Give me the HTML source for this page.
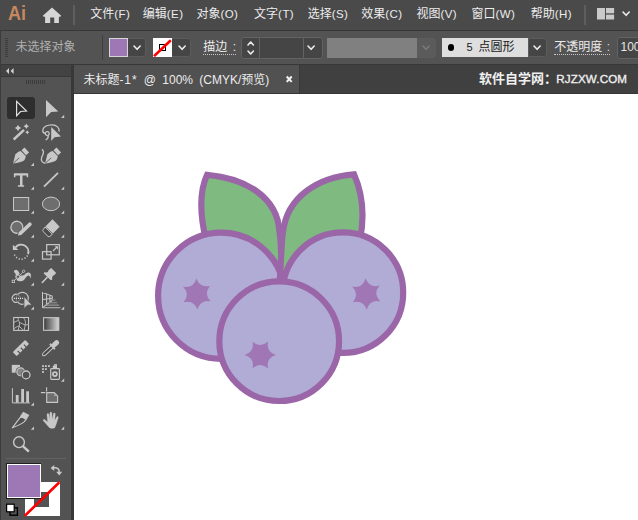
<!DOCTYPE html>
<html lang="zh"><head><meta charset="utf-8"><title>Adobe Illustrator</title>
<style>
html,body{margin:0;padding:0;overflow:hidden}
body{width:638px;height:520px;overflow:hidden;position:relative;background:#535353;
 font-family:"Liberation Sans","Noto Sans CJK SC",sans-serif;font-size:12px;color:#dcdcdc}
.abs{position:absolute}
.cjt{font-family:"Liberation Sans","Noto Sans CJK SC",sans-serif;white-space:nowrap}
.t{position:absolute;white-space:nowrap;line-height:14px;height:14px}
#menubar{left:0;top:0;width:638px;height:30px;background:#4a4a4a}
#ctrl{left:0;top:31px;width:638px;height:33px;background:#535353;overflow:hidden}
.hline{position:absolute;left:0;width:638px;height:1px;background:#383838}
.dd{position:absolute;background:#454545;box-shadow:inset 0 0 0 1px #5c5c5c}
.chev{position:absolute}
.dot{border-bottom:1px dotted #c8c8c8}
</style></head><body>
<div id="menubar" class="abs"><div class="t" style="left:7.9px;top:2.2px;font-size:21px;font-weight:bold;line-height:22px;height:22px;color:#c6885f;transform:scaleX(.86);transform-origin:0 0">Ai</div><svg class="abs" style="left:42px;top:6px" width="20" height="18" viewBox="42 6 20 18"><path d="M52 7.6L61.2 15.8L60.4 16.8H58.9V22.9H54.2V17.6H50.2V22.9H45.1V16.8H43.6L42.8 15.8Z" fill="#d6d6d6"/></svg><div class="abs" style="left:73.4px;top:5px;width:1.5px;height:20px;background:#5e5e5e"></div><div class="t" style="left:90.3px;top:7px;color:#ececec"><span class="cjt" style="font-size:12px;color:#ececec">文件</span><span style="font-size:11.5px;letter-spacing:.45px">(F)</span></div><div class="t" style="left:142.8px;top:7px;color:#ececec"><span class="cjt" style="font-size:12px;color:#ececec">编辑</span><span style="font-size:11.5px;letter-spacing:.45px">(E)</span></div><div class="t" style="left:196.4px;top:7px;color:#ececec"><span class="cjt" style="font-size:12px;color:#ececec">对象</span><span style="font-size:11.5px;letter-spacing:.45px">(O)</span></div><div class="t" style="left:254.1px;top:7px;color:#ececec"><span class="cjt" style="font-size:12px;color:#ececec">文字</span><span style="font-size:11.5px;letter-spacing:.45px">(T)</span></div><div class="t" style="left:307.7px;top:7px;color:#ececec"><span class="cjt" style="font-size:12px;color:#ececec">选择</span><span style="font-size:11.5px;letter-spacing:.45px">(S)</span></div><div class="t" style="left:361.3px;top:7px;color:#ececec"><span class="cjt" style="font-size:12px;color:#ececec">效果</span><span style="font-size:11.5px;letter-spacing:.45px">(C)</span></div><div class="t" style="left:416.4px;top:7px;color:#ececec"><span class="cjt" style="font-size:12px;color:#ececec">视图</span><span style="font-size:11.5px;letter-spacing:.45px">(V)</span></div><div class="t" style="left:471.5px;top:7px;color:#ececec"><span class="cjt" style="font-size:12px;color:#ececec">窗口</span><span style="font-size:11.5px;letter-spacing:.45px">(W)</span></div><div class="t" style="left:530.8px;top:7px;color:#ececec"><span class="cjt" style="font-size:12px;color:#ececec">帮助</span><span style="font-size:11.5px;letter-spacing:.45px">(H)</span></div><div class="abs" style="left:584.3px;top:5px;width:1.5px;height:20px;background:#5e5e5e"></div><svg class="abs" style="left:596.9px;top:7.7px" width="18" height="12" viewBox="0 0 18 12"><rect x="0" y="0" width="8" height="11.5" fill="#cacaca"/><rect x="9" y="0" width="8.1" height="5.3" fill="#cacaca"/><rect x="9" y="6.6" width="8.1" height="4.9" fill="#cacaca"/></svg><svg class="abs" style="left:621.3px;top:9.95px" width="10.2" height="7.3" viewBox="-2 -2 10.2 7.3"><path d="M0 0L3.1 3.3L6.2 0" fill="none" stroke="#ececec" stroke-width="1.6" stroke-linecap="round" stroke-linejoin="round"/></svg></div><div class="hline" style="top:30px"></div><div id="ctrl" class="abs"><div class="abs" style="left:5px;top:7px;width:3px;height:19px;background:repeating-linear-gradient(#3c3c3c 0 1px,transparent 1px 2px)"></div><div class="t" style="left:15.5px;top:8.7px"><span class="cjt" style="font-size:12px;color:#b0b0b0">未选择对象</span></div><div class="abs" style="left:102px;top:4px;width:1px;height:25px;background:#3e3e3e"></div><div class="dd" style="left:108.5px;top:7px;width:37.5px;height:19px;border-radius:3px"></div><div class="abs" style="left:108.5px;top:7px;width:17.5px;height:17px;background:#9e78b4;border:1px solid #d6d6d6"></div><svg class="abs" style="left:132.4px;top:12.85px" width="10.2" height="7.3" viewBox="-2 -2 10.2 7.3"><path d="M0 0L3.1 3.3L6.2 0" fill="none" stroke="#ececec" stroke-width="1.6" stroke-linecap="round" stroke-linejoin="round"/></svg><div class="dd" style="left:153px;top:7px;width:37.5px;height:19px;border-radius:3px"></div><svg class="abs" style="left:153px;top:7px" width="19" height="19" viewBox="0 0 19 19"><rect width="19" height="19" fill="#fff"/><rect x="6.5" y="6.5" width="6" height="6" fill="none" stroke="#000" stroke-width="1"/><path d="M1 18.2L17.8 2.2" stroke="#ff0000" stroke-width="2.6"/></svg><svg class="abs" style="left:176.70000000000002px;top:12.85px" width="10.2" height="7.3" viewBox="-2 -2 10.2 7.3"><path d="M0 0L3.1 3.3L6.2 0" fill="none" stroke="#ececec" stroke-width="1.6" stroke-linecap="round" stroke-linejoin="round"/></svg><div class="t dot" style="left:203.3px;top:9px;color:#dcdcdc;height:14px;word-spacing:2px;color:#ececec"><span class="cjt" style="font-size:12px;color:#ececec">描边</span> :</div><div class="abs" style="left:241px;top:6px;width:79.5px;height:19.5px;background:#454545;border:1px solid #626262;border-radius:3px"></div><div class="abs" style="left:259px;top:7px;width:1px;height:19.5px;background:#626262"></div><div class="abs" style="left:303px;top:7px;width:1px;height:19.5px;background:#626262"></div><svg class="abs" style="left:245.60000000000002px;top:8.5px" width="9.4" height="7" viewBox="-2 -2 9.4 7"><path d="M0 3L2.7 0L5.4 3" fill="none" stroke="#ececec" stroke-width="1.6" stroke-linecap="round" stroke-linejoin="round"/></svg><svg class="abs" style="left:245.60000000000002px;top:17.5px" width="9.4" height="7" viewBox="-2 -2 9.4 7"><path d="M0 0L2.7 3L5.4 0" fill="none" stroke="#ececec" stroke-width="1.6" stroke-linecap="round" stroke-linejoin="round"/></svg><svg class="abs" style="left:306.4px;top:12.85px" width="10.2" height="7.3" viewBox="-2 -2 10.2 7.3"><path d="M0 0L3.1 3.3L6.2 0" fill="none" stroke="#ececec" stroke-width="1.6" stroke-linecap="round" stroke-linejoin="round"/></svg><div class="abs" style="left:326.8px;top:6.5px;width:90.2px;height:20px;background:#808080"></div><div class="abs" style="left:417px;top:6.5px;width:18.5px;height:20px;background:#5b5b5b;border-radius:0 3px 3px 0"></div><svg class="abs" style="left:421.4px;top:12.85px" width="10.2" height="7.3" viewBox="-2 -2 10.2 7.3"><path d="M0 0L3.1 3.3L6.2 0" fill="none" stroke="#7a7a7a" stroke-width="1.6" stroke-linecap="round" stroke-linejoin="round"/></svg><div class="abs" style="left:442px;top:7px;width:86px;height:19px;background:#dedede"></div><div class="abs" style="left:447.8px;top:13.3px;width:6.4px;height:6.4px;border-radius:3.2px;background:#000"></div><div class="t" style="left:466.4px;top:9px;color:#1a1a1a"><span style="font-size:11px">5</span><span style="display:inline-block;width:5.9px"></span><span class="cjt" style="font-size:12px;color:#1a1a1a">点圆形</span></div><div class="dd" style="left:528px;top:7px;width:18.5px;height:19px;border-radius:0 3px 3px 0"></div><svg class="abs" style="left:532.1px;top:12.85px" width="10.2" height="7.3" viewBox="-2 -2 10.2 7.3"><path d="M0 0L3.1 3.3L6.2 0" fill="none" stroke="#ececec" stroke-width="1.6" stroke-linecap="round" stroke-linejoin="round"/></svg><div class="t dot" style="left:554.3px;top:9px;color:#dcdcdc;word-spacing:1px"><span class="cjt" style="font-size:12px;color:#ececec">不透明度</span> :</div><div class="abs" style="left:617px;top:6px;width:30px;height:19.5px;background:#454545;border:1px solid #626262;border-radius:3px"></div><div class="t" style="left:620.5px;top:9px;color:#e4e4e4">100</div></div><div class="hline" style="top:64px"></div><div class="abs" style="left:71px;top:65px;width:567px;height:29px;background:#404040"></div><div class="abs" style="left:71px;top:65px;width:3px;height:455px;background:#383838"></div><div class="abs" style="left:74px;top:65px;width:225px;height:29px;background:#515151"></div><div class="abs" style="left:299px;top:65px;width:1px;height:29px;background:#3a3a3a"></div><div class="abs" style="left:74px;top:93px;width:564px;height:1px;background:#363636"></div><div class="t" style="left:83.4px;top:72.6px;color:#ececec;word-spacing:3px"><span class="cjt" style="font-size:12px;color:#ececec">未标题</span><span style="letter-spacing:.9px">-1*</span> @ 100% (CMYK/<span class="cjt" style="font-size:12px;color:#ececec">预览</span>)</div><svg class="abs" style="left:284.7px;top:74.8px" width="9" height="9" viewBox="0 0 9 9"><path d="M1.7 1.5L6.7 6.9M6.7 1.5L1.7 6.9" stroke="#f2f2f2" stroke-width="2"/></svg><div class="t" style="left:479px;top:72px;font-size:13px;color:#f0f0f0"><span class="cjt" style="font-size:13px;font-weight:bold;color:#f0f0f0">软件自学网：</span><span style="font-size:11.6px;letter-spacing:.15px;margin-left:-.8px;-webkit-text-stroke:.35px #f0f0f0">RJZXW.COM</span></div><div class="abs" style="left:74px;top:94px;width:564px;height:426px;background:#fff"></div><svg class="abs" style="left:74px;top:94px" width="564" height="426" viewBox="74 94 564 426"><path d="M207.1 174.8 C244 178 277.5 196 279.5 232 C281 240 281.5 260 281.5 279 L230 260 L206 240 C199.3 212 200 190 207.1 174.8Z" fill="#7fba80" stroke="#9b66a7" stroke-width="6.2" stroke-linejoin="miter" stroke-miterlimit="10"/><circle cx="221.25" cy="295.75" r="63.15" fill="#b0acd6" stroke="#9b66a7" stroke-width="6.2"/><path d="M354 174.3 C318 177 287 197 283 232 C281.6 240 281.2 257 279.9 279 L330 260 L360 240 C365.5 212 361 190 354 174.3Z" fill="#7fba80" stroke="#9b66a7" stroke-width="6.2" stroke-linejoin="miter" stroke-miterlimit="10"/><circle cx="342.95" cy="292.65" r="60.25" fill="#b0acd6" stroke="#9b66a7" stroke-width="6.2"/><circle cx="279.2" cy="341.15" r="59.85" fill="#b0acd6" stroke="#9b66a7" stroke-width="6.2"/><path d="M196.4 278.4Q200.0 288.3 210.1 285.7Q203.4 293.8 210.7 301.3Q200.3 299.5 197.4 309.6Q193.8 299.7 183.7 302.3Q190.4 294.2 183.1 286.7Q193.5 288.5 196.4 278.4Z" fill="#a077b4"/><path d="M268.1 341.5Q265.9 351.8 275.9 355.0Q265.9 358.2 268.1 368.5Q260.3 361.5 252.5 368.5Q254.7 358.2 244.7 355.0Q254.7 351.8 252.5 341.5Q260.3 348.5 268.1 341.5Z" fill="#a077b4"/><path d="M365.6 278.2Q369.3 288.3 379.6 285.6Q372.7 293.8 380.2 301.4Q369.6 299.5 366.8 309.8Q363.1 299.7 352.8 302.4Q359.7 294.2 352.2 286.6Q362.8 288.5 365.6 278.2Z" fill="#a077b4"/></svg><div class="abs" style="left:0;top:31px;width:1.4px;height:489px;background:#3c3c3c"></div><div class="abs" style="left:1px;top:65px;width:70px;height:11px;background:#434343"></div><div class="abs" style="left:1px;top:76px;width:70px;height:1px;background:#383838"></div><svg class="abs" style="left:5px;top:67px" width="10" height="8" viewBox="0 0 10 8"><path d="M4 1L1 4L4 7ZM8.6 1L5.6 4L8.6 7Z" fill="#d4d4d4"/></svg><div class="abs" style="left:26px;top:80px;width:20px;height:4px;background:repeating-linear-gradient(90deg,#3c3c3c 0 1px,transparent 1px 2px)"></div><div class="abs" style="left:7px;top:97.2px;width:27.8px;height:21.6px;background:#2e2e2e;border-radius:3px"></div><svg class="abs" style="left:0;top:90px" width="71" height="372" viewBox="0 90 71 372"><path d="M16.6 101.3V115.7L20.6 111.5L26.5 111.1Z" fill="none" stroke="#e4e4e4" stroke-width="1.15" stroke-linejoin="miter"/><path d="M46 100V117.2L51.2 111.9L58.3 111.5Z" fill="#c8c8c8"/><path d="M64.2 114.8V118H61.0Z" fill="#c8c8c8"/><path d="M13.7 139.5L24 129.9" stroke="#c8c8c8" stroke-width="2.5" fill="none"/><path d="M18 124.8L19.152 126.848L21.2 128L19.152 129.152L18 131.2L16.848 129.152L14.8 128L16.848 126.848Z" fill="#c8c8c8"/><path d="M26.3 123.5L27.308 125.292L29.1 126.3L27.308 127.30799999999999L26.3 129.1L25.292 127.30799999999999L23.5 126.3L25.292 125.292Z" fill="#c8c8c8"/><path d="M27.3 130.20000000000002L28.056 131.544L29.400000000000002 132.3L28.056 133.056L27.3 134.4L26.544 133.056L25.2 132.3L26.544 131.544Z" fill="#c8c8c8"/><path d="M59 131.6 C59.9 128 56.6 124.9 52 124.8 C47 124.7 42.9 127 42.8 130.2 C42.7 132 43.8 133.3 45.4 133.7" fill="none" stroke="#c8c8c8" stroke-width="1.3"/><circle cx="47.3" cy="133.6" r="1.9" fill="none" stroke="#c8c8c8" stroke-width="1.2"/><path d="M48.1 135.4 C48.5 137.2 47.8 138.7 46.1 139.6" fill="none" stroke="#c8c8c8" stroke-width="1.3" stroke-linecap="round"/><path d="M51.2 127V141L54.5 137.2L61 136.6Z" fill="#c8c8c8"/><g transform="translate(0 0)"><path d="M13.1 163.6 L15.3 154.6 C16.6 152.6 18.6 151.6 20.6 150.9 L25.8 156 C25.4 158 24.9 159.6 24 160.6 C22 161.8 18 163 13.1 163.6Z" fill="#c8c8c8"/><path d="M21.5 150.3 L24.5 147.6 L29.1 152.6 L26.1 155.3Z" fill="#c8c8c8"/><path d="M13.4 163.2 L19.2 157.8" stroke="#535353" stroke-width="0.8" fill="none"/></g><path d="M34 162.8V166H30.8Z" fill="#c8c8c8"/><g transform="translate(32 0)"><path d="M13.1 163.6 L15.3 154.6 C16.6 152.6 18.6 151.6 20.6 150.9 L25.8 156 C25.4 158 24.9 159.6 24 160.6 C22 161.8 18 163 13.1 163.6Z" fill="#c8c8c8"/><path d="M21.5 150.3 L24.5 147.6 L29.1 152.6 L26.1 155.3Z" fill="#c8c8c8"/><path d="M13.4 163.2 L19.2 157.8" stroke="#535353" stroke-width="0.8" fill="none"/></g><path d="M41.9 149.2 C45.6 151.6 42.4 154.8 41.6 157.6 C40.9 160.4 41.8 162.6 45.2 163.4" fill="none" stroke="#c8c8c8" stroke-width="1.3"/><path d="M13.9 173.3H28.2V177.3H26.7V175.4H22.5V185.2H24.1V186.8H17.9V185.2H20V175.4H15.4V177.3H13.9Z" fill="#c8c8c8"/><path d="M34 186.60000000000002V189.8H30.8Z" fill="#c8c8c8"/><path d="M44 186.7L58 172.9" stroke="#c8c8c8" stroke-width="1.8" fill="none"/><path d="M64.2 186.60000000000002V189.8H61.0Z" fill="#c8c8c8"/><rect x="13.5" y="197.5" width="15.2" height="13" fill="#6e6e6e" stroke="#c8c8c8" stroke-width="1"/><path d="M34 210.60000000000002V213.8H30.8Z" fill="#c8c8c8"/><ellipse cx="51" cy="203.9" rx="8.6" ry="6.8" fill="#6e6e6e" stroke="#c8c8c8" stroke-width="1"/><path d="M64.2 210.60000000000002V213.8H61.0Z" fill="#c8c8c8"/><path d="M17.6 233.2 A6 6 0 1 1 22.6 229" fill="#6e6e6e" stroke="#c8c8c8" stroke-width="1.3"/><path d="M18 235.6L18.6 232.6L28.6 222.9 A1.7 1.7 0 0 1 31.2 225.5L21.2 235.1Z" fill="#c8c8c8"/><path d="M34 234.60000000000002V237.8H30.8Z" fill="#c8c8c8"/><path d="M52.5 219.3L59.6 226.7L53 233.6L45.4 226.4Z" fill="#c8c8c8"/><path d="M45 227L52.4 234.2L49.8 236.4 C49.2 236.9 48.6 236.9 48 236.4L43.2 231.6 C42.6 231 42.6 230.3 43.2 229.7Z" fill="#4c4c4c" stroke="#c8c8c8" stroke-width="1"/><path d="M64.2 234.60000000000002V237.8H61.0Z" fill="#c8c8c8"/><path d="M15.5 247.3 A7.3 7.3 0 0 1 28.1 254.1" fill="none" stroke="#c8c8c8" stroke-width="1.9"/><path d="M12.9 244.8V249.9H18.3Z" fill="#c8c8c8"/><path d="M27.5 255.5 A7.3 7.3 0 0 1 14.1 253.6" fill="none" stroke="#c8c8c8" stroke-width="1.5" stroke-dasharray="1.2 1.75"/><path d="M34 258.6V261.8H30.8Z" fill="#c8c8c8"/><rect x="46.7" y="244.6" width="12.6" height="10.2" fill="none" stroke="#c8c8c8" stroke-width="1.2"/><rect x="42.5" y="251.7" width="8.6" height="7.4" fill="none" stroke="#c8c8c8" stroke-width="1.2"/><path d="M53 251L57 247" stroke="#c8c8c8" stroke-width="1.1"/><path d="M54.6 246.2H58V249.6Z" fill="#c8c8c8"/><path d="M64.2 258.6V261.8H61.0Z" fill="#c8c8c8"/><path d="M13.9 272.2 C13.7 270.4 15.4 269.2 16.9 270 C19 271.2 19.3 273.6 20.4 275 C21.6 276.2 23.6 275.4 25.2 274 C26.8 272.6 29 272 30.2 273.2 C31.4 274.6 31 276.8 30.4 278.4 C30 276.6 29.4 275.4 28.2 275.6 C26.6 276 25.6 278.4 24 280 C22.4 281.4 19.2 281.6 17.2 280.6 C15.2 279.6 15 277.6 15.6 275.6 C16 274.2 15.4 272.8 13.9 272.2Z" fill="#c8c8c8"/><path d="M15.4 279.4L22.6 272.4" stroke="#535353" stroke-width="2"/><path d="M13.4 281.4L23.6 271.6" stroke="#c8c8c8" stroke-width="0.9"/><rect x="12.2" y="280.2" width="2.4" height="2.4" fill="#535353" stroke="#c8c8c8" stroke-width="0.8"/><circle cx="23.6" cy="271.2" r="1.2" fill="#535353" stroke="#c8c8c8" stroke-width="0.8"/><circle cx="18" cy="276.7" r="1.6" fill="#535353" stroke="#c8c8c8" stroke-width="0.8"/><path d="M34 282.6V285.8H30.8Z" fill="#c8c8c8"/><path d="M51.2 267.9L56.2 272.9L54.4 275.1C53 275.6 52.2 276.6 52.1 278L52.3 279.6L50.8 280.3L43.7 273.5L44.2 272.3L46.4 272.4C47.6 272.2 48.4 271.4 48.6 270.2L49.6 269.2Z" fill="#c8c8c8"/><path d="M47 277.5L42.3 282.5" stroke="#c8c8c8" stroke-width="1.6" stroke-linecap="round"/><path d="M64.2 282.6V285.8H61.0Z" fill="#c8c8c8"/><path d="M17.68 294.5A4.1 4.1 0 1 0 17.68 302.1" fill="none" stroke="#c8c8c8" stroke-width="1.2"/><path d="M17.68 294.5A6 6 0 1 1 17.68 302.1" fill="none" stroke="#c8c8c8" stroke-width="1.2"/><path d="M17.68 294.5A4.1 4.1 0 0 1 17.68 302.1M17.68 294.5A6 6 0 0 0 17.68 302.1" fill="none" stroke="#878787" stroke-width="0.9"/><path d="M13.9 298.4H24" stroke="#e6e6e6" stroke-width="1.1" stroke-dasharray="1 1.05"/><path d="M24 296.4V308.6L27.4 305.2L32 304.9Z" fill="#c8c8c8" stroke="#535353" stroke-width="0.8"/><path d="M34 306.6V309.8H30.8Z" fill="#c8c8c8"/><path d="M42.5 292V307.8M42.5 292.4L52.2 296V300.4L42.5 307.6M46.6 293.8V304.4M49.9 295V302M42.5 299.5L52.2 298.2" stroke="#c8c8c8" stroke-width="1.05" fill="none"/><path d="M52.4 300.2H55.4" stroke="#7c7c7c" stroke-width="1.6"/><path d="M49 302.7H57" stroke="#8a8a8a" stroke-width="1.3"/><path d="M45.8 305.1H58.9" stroke="#9c9c9c" stroke-width="1.1"/><path d="M42.5 307.7H60.4" stroke="#b4b4b4" stroke-width="1.1"/><path d="M64.2 306.6V309.8H61.0Z" fill="#c8c8c8"/><rect x="13.7" y="317.5" width="14.8" height="12.9" fill="#494949" stroke="#c8c8c8" stroke-width="1.1"/><path d="M17.7 317.6C18.4 320.4 20 322.4 19.4 325C19 327 18.4 328.6 18.1 330.2M23.4 317.6C25.6 320 25.8 322.6 25.2 325.2C24.9 327 24.4 328.8 24.2 330.2M13.6 322.6C15.2 321.6 16.6 321.2 18 320.6M19.6 322.6C21.6 323.4 23.6 324.4 25.3 325C26.6 325 27.8 324.6 28.6 324.3M13.6 329.4C15 327.6 16.8 326.6 18.8 326.2C20.4 327 21.8 328.4 22.8 329.8" fill="none" stroke="#bcbcbc" stroke-width="0.95"/><defs><linearGradient id="gr" x1="0" x2="1" y1="0" y2="0"><stop offset="0" stop-color="#3a3a3a"/><stop offset="1" stop-color="#d8d8d8"/></linearGradient></defs><rect x="43.6" y="317.7" width="15.2" height="12.6" fill="url(#gr)" stroke="#c8c8c8" stroke-width="1.1"/><g transform="rotate(-44.5 21 348)"><rect x="12.3" y="345.1" width="17.4" height="5.6" rx="0.9" fill="#c8c8c8"/><path d="M16.6 351V347.7M21 351V347.7M25.4 351V347.7" stroke="#535353" stroke-width="1.2"/></g><g transform="translate(43.2 355) rotate(-42.7)"><path d="M13 -1.55H2 C0.2 -1.55 -0.6 -0.6 -0.6 0 C-0.6 0.6 0.2 1.55 2 1.55H13" fill="#484848" stroke="#c8c8c8" stroke-width="1"/><rect x="11.6" y="-3.7" width="2" height="7.4" rx="0.5" fill="#c8c8c8"/><path d="M10.4 -1.9H19.2 A2.4 2.4 0 0 1 19.2 2.9 H19.2 A2.4 2.4 0 0 0 19.2 -1.9Z" fill="#c8c8c8"/><rect x="12.6" y="-2.5" width="8.2" height="5" rx="2.5" fill="#c8c8c8"/></g><rect x="11.8" y="364.9" width="8.2" height="7.8" fill="#c8c8c8"/><circle cx="20.7" cy="371.8" r="5.1" fill="#535353"/><circle cx="20.7" cy="371.8" r="3.9" fill="#868686" stroke="#c8c8c8" stroke-width="1.1"/><circle cx="26.1" cy="374.9" r="5.2" fill="#535353"/><circle cx="26.1" cy="374.9" r="3.9" fill="#515151" stroke="#c8c8c8" stroke-width="1.3"/><rect x="42.10" y="365.20" width="1.8" height="1.8" fill="#c8c8c8"/><rect x="45.00" y="365.20" width="1.8" height="1.8" fill="#c8c8c8"/><rect x="48.00" y="365.20" width="1.8" height="1.8" fill="#c8c8c8"/><rect x="42.10" y="368.20" width="1.8" height="1.8" fill="#c8c8c8"/><rect x="45.00" y="368.20" width="1.8" height="1.8" fill="#c8c8c8"/><rect x="42.10" y="371.10" width="1.8" height="1.8" fill="#c8c8c8"/><rect x="50.7" y="368.6" width="8.7" height="10.7" rx="0.8" fill="none" stroke="#c8c8c8" stroke-width="1.15"/><rect x="52.8" y="365.6" width="4.2" height="3" fill="#c8c8c8"/><rect x="54" y="364.2" width="3" height="1.6" fill="#c8c8c8"/><circle cx="54.9" cy="374.1" r="2" fill="none" stroke="#c8c8c8" stroke-width="1.7"/><path d="M64.2 378.6V381.8H61.0Z" fill="#c8c8c8"/><path d="M12.4 388.2V402.9H29.9" fill="none" stroke="#c8c8c8" stroke-width="1"/><rect x="15.8" y="395" width="2.8" height="7.6" fill="#c8c8c8"/><rect x="21.2" y="389" width="2.8" height="13.6" fill="#c8c8c8"/><rect x="26.2" y="391.3" width="2.8" height="11.3" fill="#c8c8c8"/><path d="M34 402.6V405.8H30.8Z" fill="#c8c8c8"/><path d="M46.7 392.6H54.2L57.6 396V402.4H46.7Z" fill="#6e6e6e" stroke="#c8c8c8" stroke-width="1.1"/><path d="M54.3 393V396.1H57.5Z" fill="#a8a8a8"/><path d="M40.9 392.6H45.3M46.6 387.2V391.4" stroke="#c8c8c8" stroke-width="1.1" fill="none"/><path d="M21 416.3L12.3 427.8C17.4 425.8 22.2 423.4 24.4 421.6L26 419.3Z" fill="#505050" stroke="#c8c8c8" stroke-width="1.15" stroke-linejoin="round"/><path d="M23.1 412.1L29 415.1L26.4 419.5L20.6 416.1Z" fill="#c8c8c8" stroke="#c8c8c8" stroke-width="0.5" stroke-linejoin="round"/><path d="M34 426.6V429.8H30.8Z" fill="#c8c8c8"/><path d="M49.4 427.8 L43.3 420.7 C42.8 419.9 43.8 418.9 44.7 419.5 L47.6 421.9 L46.95 414.5 C46.9 413.3 48.8 413.1 49 414.4 L49.65 419.6 L49.85 413 C49.9 411.8 51.8 411.8 51.9 413 L52.15 419.5 L53.4 413.6 C53.7 412.5 55.4 412.8 55.3 414 L54.75 420.2 L56.7 416.9 C57.3 416 58.7 416.6 58.3 417.7 L56.3 424 L54.8 427.8 C53.2 428.7 51 428.7 49.4 427.8Z" fill="#c8c8c8" stroke="#c8c8c8" stroke-width="0.25" stroke-linejoin="round"/><path d="M64.2 426.6V429.8H61.0Z" fill="#c8c8c8"/><circle cx="19" cy="442.2" r="5.4" fill="none" stroke="#c8c8c8" stroke-width="1.4"/><path d="M23.4 446.6L28.2 451" stroke="#c8c8c8" stroke-width="2.4" stroke-linecap="round"/></svg><div class="abs" style="left:6px;top:458px;width:60px;height:1px;background:#626262"></div><div class="abs" style="left:24.6px;top:481.5px;width:35px;height:34.5px;background:#fff"></div><div class="abs" style="left:34.2px;top:491.5px;width:15.3px;height:15px;background:#535353"></div><svg class="abs" style="left:24px;top:481px" width="37" height="36" viewBox="24 481 37 36"><path d="M24.8 515.8L59.4 482.2" stroke="#ff0000" stroke-width="2.6"/></svg><div class="abs" style="left:6.2px;top:463.3px;width:35.3px;height:35.3px;background:#1e1e1e"></div><div class="abs" style="left:6.8px;top:463.9px;width:34.1px;height:34.1px;background:#fff"></div><div class="abs" style="left:7.9px;top:465px;width:31.9px;height:31.9px;background:#9e78b4"></div><svg class="abs" style="left:48px;top:462px" width="16" height="16" viewBox="48 462 16 16"><path d="M53.4 467.8 C57.4 467.2 59.4 469 59.2 472.4" fill="none" stroke="#c8c8c8" stroke-width="1.6"/><path d="M50.6 467.9L54.2 464.9V470.9Z" fill="#c8c8c8"/><path d="M56.2 471.8H62.2L59.2 475.4Z" fill="#c8c8c8"/></svg><svg class="abs" style="left:5px;top:502px" width="15" height="15" viewBox="5 502 15 15"><rect x="10" y="507.8" width="7.4" height="7.4" fill="#535353" stroke="#000" stroke-width="1.4"/><rect x="6.6" y="504.2" width="7.6" height="7.6" fill="#fff" stroke="#000" stroke-width="1.2"/></svg></body></html>
